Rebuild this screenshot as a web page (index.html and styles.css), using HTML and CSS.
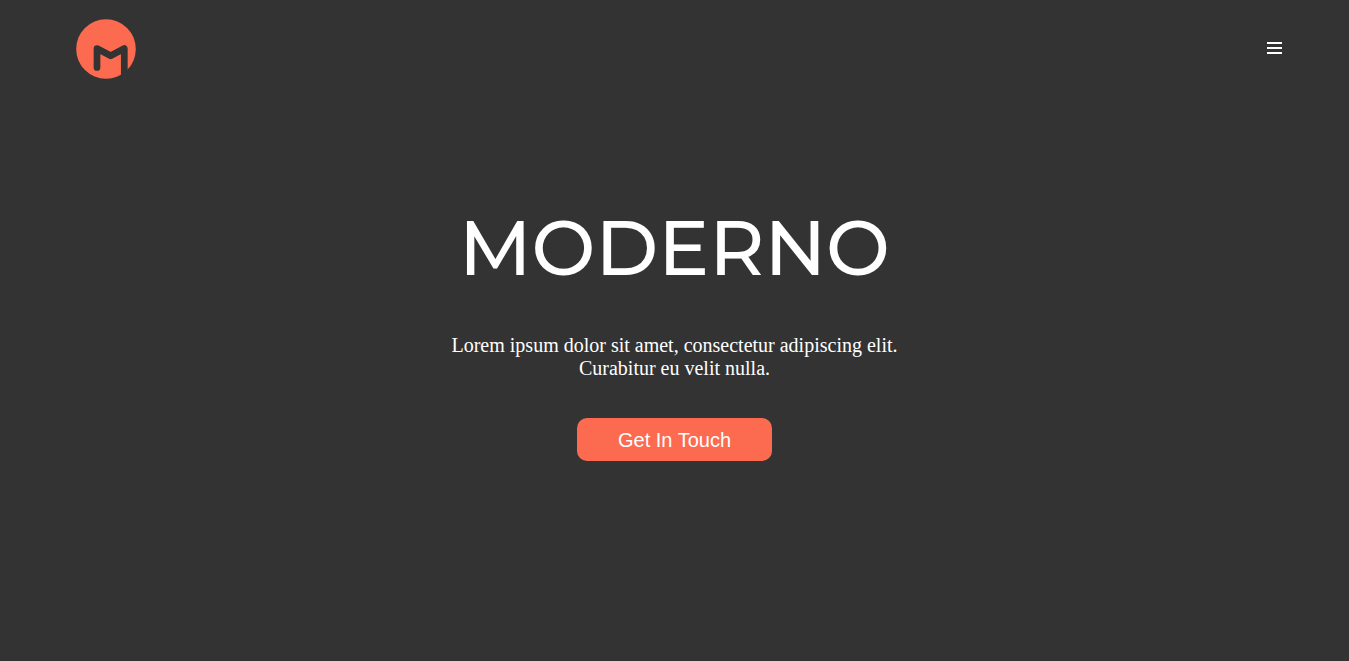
FILE: index.html
```html
<!DOCTYPE html>
<html lang="en">
<head>
<meta charset="utf-8">
<title>Moderno</title>
<link rel="stylesheet" href="styles.css">
</head>
<body>
<header class="header">
  <a class="logo" href="#" aria-label="Moderno home">
    <svg viewBox="0 0 60 60" width="60" height="60" aria-hidden="true">
      <circle cx="30" cy="30" r="29.800" fill="#fc6b4f"/>
      <path d="M21 48.500V29.500L34.700 36.800L48.300 29.500V64" fill="none" stroke="#333" stroke-width="6.700" stroke-linecap="round" stroke-linejoin="round"/>
    </svg>
  </a>
  <button class="menu" type="button" aria-label="Open menu">
    <svg viewBox="0 0 15 12" width="15" height="12" aria-hidden="true"><path fill="#fff" d="M0 0h15v2H0zM0 5h15v2H0zM0 10h15v2H0z"/></svg>
  </button>
</header>
<main class="hero">
  <h1 class="title">MODERNO</h1>
  <p class="lead">Lorem ipsum dolor sit amet, consectetur adipiscing elit. Curabitur eu velit nulla.</p>
  <button class="cta" type="button">Get In Touch</button>
</main>
</body>
</html>
```
FILE: styles.css
```css
* {
  box-sizing: border-box;
}

body {
  margin: 0;
  min-height: 100vh;
  background: #333;
  color: #fff;
  font-family: "Liberation Serif", "Times New Roman", serif;
}

.header {
  display: flex;
  justify-content: space-between;
  align-items: center;
  padding: 19px 67px 19px 76px;
}

.logo,
.logo svg,
.menu svg {
  display: block;
}

.menu {
  padding: 0 0 2px;
  border: 0;
  background: none;
  cursor: pointer;
}

.hero {
  display: flex;
  flex-direction: column;
  align-items: center;
  padding: 102px 24px 40px;
  text-align: center;
}

.title {
  margin: 0;
  font: 500 76px/96px Montserrat, Inter, sans-serif;
}

.lead {
  max-width: 480px;
  margin: 38px 0;
  font-size: 20px;
  line-height: 23px;
}

.cta {
  padding: 11px 41px 9px;
  border: 0;
  border-radius: 10px;
  background: #fc6b4f;
  color: #fff;
  font: 20px/23px "Liberation Sans", Arial, sans-serif;
  cursor: pointer;
}
```
